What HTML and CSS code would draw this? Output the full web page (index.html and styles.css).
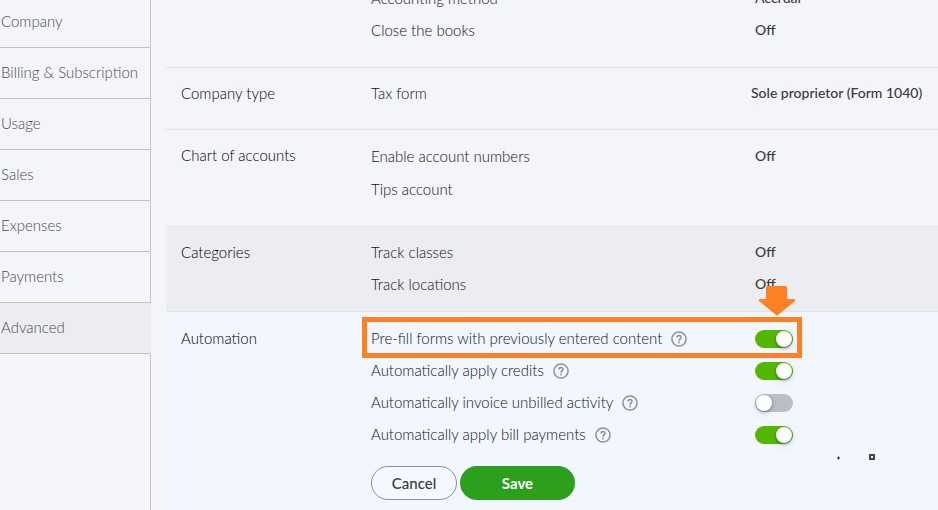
FILE: index.html
```html
<!DOCTYPE html>
<html lang="en">
<head>
<meta charset="utf-8">
<title>Account and Settings</title>
<link rel="stylesheet" href="styles.css">
</head>
<body>
<svg class="defs" aria-hidden="true">
  <symbol id="help" viewBox="0 0 16 16">
    <circle cx="8" cy="8" r="7.1" fill="none" stroke="currentColor" stroke-width="1.5"/>
    <path d="M6 6.4a2 1.9 0 1 1 3.1 1.6C8.3 8.5 8 8.8 8 9.7" fill="none" stroke="currentColor" stroke-width="1.5"/>
    <circle cx="8" cy="11.5" r=".9" fill="currentColor"/>
  </symbol>
</svg>
<div class="shell">
  <nav class="sidebar">
    <a href="#company">Company</a>
    <a href="#billing">Billing &amp; Subscription</a>
    <a href="#usage">Usage</a>
    <a href="#sales">Sales</a>
    <a href="#expenses">Expenses</a>
    <a href="#payments">Payments</a>
    <a href="#advanced" class="active">Advanced</a>
    <div class="rest"></div>
  </nav>
  <main class="content">
    <section class="group">
      <h2></h2>
      <div class="rows">
        <div class="row"><span>Accounting method</span><b>Accrual</b></div>
        <div class="row"><span>Close the books</span><b>Off</b></div>
      </div>
    </section>
    <section class="group compact">
      <h2>Company type</h2>
      <div class="rows">
        <div class="row"><span>Tax form</span><b class="wide">Sole proprietor (Form 1040)</b></div>
      </div>
    </section>
    <section class="group roomy">
      <h2>Chart of accounts</h2>
      <div class="rows">
        <div class="row"><span>Enable account numbers</span><b>Off</b></div>
        <div class="row"><span>Tips account</span></div>
      </div>
    </section>
    <section class="group hovered">
      <h2>Categories</h2>
      <div class="rows">
        <div class="row"><span>Track classes</span><b>Off</b></div>
        <div class="row"><span>Track locations</span><b>Off</b></div>
      </div>
    </section>
    <section class="group editing">
      <h2>Automation</h2>
      <form class="rows">
        <div class="row">
          <div class="name"><label for="prefill">Pre-fill forms with previously entered content</label><svg class="help"><use href="#help"/></svg></div>
          <input class="toggle" type="checkbox" id="prefill" checked>
          <div class="highlight"></div>
          <svg class="arrow" viewBox="0 0 38 30"><path d="M9 0H27Q29 0 29 2V13H36Q38 14 37 15L20 29Q19 30 18 29L1 15Q0 14 2 13H8V1Z"/></svg>
        </div>
        <div class="row">
          <div class="name"><label for="credits">Automatically apply credits</label><svg class="help"><use href="#help"/></svg></div>
          <input class="toggle" type="checkbox" id="credits" checked>
        </div>
        <div class="row">
          <div class="name"><label for="invoice">Automatically invoice unbilled activity</label><svg class="help"><use href="#help"/></svg></div>
          <input class="toggle" type="checkbox" id="invoice">
        </div>
        <div class="row">
          <div class="name"><label for="bills">Automatically apply bill payments</label><svg class="help"><use href="#help"/></svg></div>
          <input class="toggle" type="checkbox" id="bills" checked>
        </div>
        <div class="actions">
          <button type="button" class="cancel">Cancel</button>
          <button type="button" class="save">Save</button>
          <svg class="marks" viewBox="0 0 40 8"><path d="M1 5h3M2.5 3.5v3" stroke="#222"/><rect x="34" y="2" width="4" height="4" fill="#fff" stroke="#444" stroke-width="2"/></svg>
        </div>
      </form>
    </section>
  </main>
</div>
</body>
</html>
```
FILE: styles.css
```css
* { box-sizing: border-box; }

body {
  margin: 0;
  height: 100vh;
  overflow: hidden;
  background: #f4f5f9;
  color: #393a3d;
  font: 300 15px/20px Lato, "Open Sans", sans-serif;
}

.defs { position: absolute; width: 0; height: 0; }

.shell { display: flex; gap: 15px; min-height: 100vh; }

.sidebar {
  display: flex;
  flex-direction: column;
  flex: 0 0 151px;
  margin-top: -3px;
}

.sidebar a {
  padding: 14px 0 16px 1px;
  border-right: 1px solid #c7c8cc;
  border-bottom: 1px solid #c2c3c6;
  color: #4b4c52;
  text-decoration: none;
  white-space: nowrap;
}

.sidebar .active { background: #ebedf0; border-right-color: #ebedf0; }

.rest { flex: 1; border-right: 1px solid #c7c8cc; }

.content {
  display: flex;
  flex-direction: column;
  flex: 1;
  margin-top: -27px;
}

.group {
  display: grid;
  grid-template-columns: 190px 1fr;
  padding: 10px 0 20px 15px;
  border-bottom: 1px solid #e0e3e8;
}

.group h2 { margin: 0; font-size: 15px; line-height: 30px; font-weight: 300; color: #000; }

.row {
  position: relative;
  display: grid;
  grid-template-columns: 384px 1fr;
  align-items: center;
  height: 32px;
}

.row span, .row label { padding-bottom: 2px; color: #111216; }
.row b { padding-bottom: 2px; font-size: 14px; font-weight: 500; white-space: nowrap; }
.row .wide { margin-left: -4px; }

.compact { padding-bottom: 19px; }
.roomy .row { height: 33px; }
.hovered { padding-bottom: 10px; background: #ecedf0; border-bottom-color: #dde4ec; }

.editing {
  flex: 1;
  padding-top: 11px;
  align-content: start;
  background: #f2f7ff;
  border-bottom: 0;
}

.name { display: flex; align-items: center; gap: 9px; }

.help { width: 16px; height: 16px; color: #8d9096; }

.toggle {
  appearance: none;
  width: 38px;
  height: 18px;
  margin: 0;
  padding: 1px;
  border-radius: 9px;
  background: #babec5;
}

.toggle::before {
  content: "";
  display: block;
  width: 16px;
  height: 16px;
  border-radius: 50%;
  background: #fff;
  box-shadow: 0 1px 3px rgba(0, 0, 0, .4), 0 4px 10px rgba(0, 0, 0, .08);
}

.toggle:checked { background: #53b700; }
.toggle:checked::before { margin-left: auto; }

.highlight {
  position: absolute;
  top: -6px;
  left: -9px;
  width: 440px;
  height: 41px;
  border: 5px solid #ff8023;
}

.arrow {
  position: absolute;
  top: -37px;
  left: 387px;
  width: 38px;
  height: 30px;
  fill: #ff8023;
}

.actions { position: relative; display: flex; gap: 3px; margin-top: 15px; }

.actions button {
  height: 34px;
  border-radius: 17px;
  font: 500 15px/20px Lato, "Open Sans", sans-serif;
}

.cancel { width: 86px; border: 1px solid #8d9096; background: #f4f8ff; color: #393a3d; }
.actions .save { width: 115px; border: 0; background: #2ca01c; color: #fff; font-weight: 700; }

.marks { position: absolute; top: -13px; left: 465px; width: 40px; height: 8px; }
```
